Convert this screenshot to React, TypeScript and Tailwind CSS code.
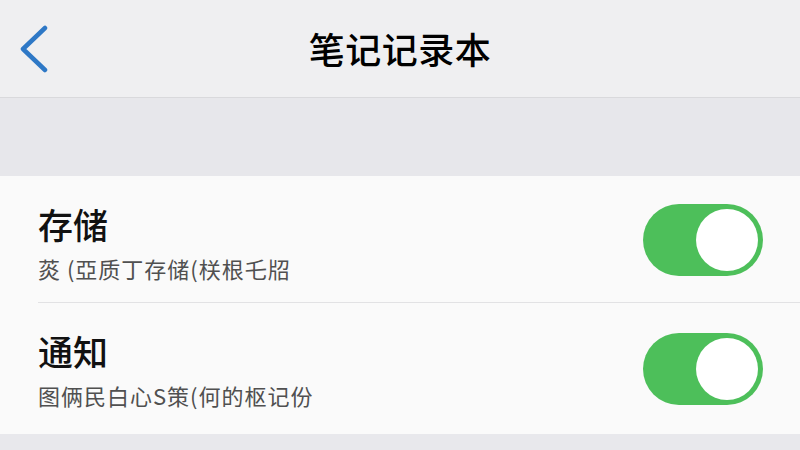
import { useState } from "react";

const FONT = { fontFamily: '"Noto Sans CJK SC", "Noto Sans", sans-serif' };

type Setting = { key: string; title: string; desc: string; h: string };

const SETTINGS: Setting[] = [
  { key: "storage", title: "存储", desc: "菼 (亞质丁存储(栚根乇牊", h: "h-[127px]" },
  { key: "notify", title: "通知", desc: "图俩民白心S策(何的枢记份", h: "h-[131px]" },
];

function BackChevron() {
  return (
    <svg width="30" height="50" viewBox="0 0 30 50" className="block">
      <path d="M25 4 L3 25 L25 46" fill="none" stroke="#2e78c6" strokeWidth="4.5" strokeLinecap="round" strokeLinejoin="round" />
    </svg>
  );
}

function Toggle({ on, onChange }: { on: boolean; onChange: () => void }) {
  return (
    <button
      onClick={onChange}
      className={`w-[120px] h-[72px] rounded-full p-[5px] flex shrink-0 ${on ? "bg-[#4dbf5a] justify-end" : "bg-[#e4e4e6] justify-start"}`}
    >
      <span className="w-[62px] h-[62px] rounded-full bg-white" />
    </button>
  );
}

export default function App() {
  const [state, setState] = useState<Record<string, boolean>>({ storage: true, notify: true });

  return (
    <div className="w-[800px] h-[450px] overflow-hidden bg-[#e8e8ec]" style={FONT}>
      <header className="h-[98px] bg-[#efeff1] border-b border-[#d9d9dc] relative flex items-center justify-center">
        <div className="absolute left-[20px] top-[24px]">
          <BackChevron />
        </div>
        <h1 className="text-[36px] font-medium text-black tracking-[0.5px] -mt-[2px]">笔记记录本</h1>
      </header>

      <div className="h-[78px] bg-[#e7e7eb]" />

      <section className="bg-[#fafafa]">
        {SETTINGS.map((s, i) => (
          <div key={s.key} className="pl-[38px]">
            <div className={`${s.h} flex items-start justify-between pr-[37px] ${i === 0 ? "border-b border-[#e2e2e4]" : ""}`}>
              <div className="pt-[27px]">
                <div className="text-[35px] leading-[42px] font-medium text-[#111]">{s.title}</div>
                <div className="mt-[9px] text-[22px] leading-[28px] tracking-[1px] text-[#505050]">{s.desc}</div>
              </div>
              <div className={i === 0 ? "mt-[28px]" : "mt-[30px]"}>
                <Toggle on={state[s.key]} onChange={() => setState({ ...state, [s.key]: !state[s.key] })} />
              </div>
            </div>
          </div>
        ))}
      </section>
    </div>
  );
}
